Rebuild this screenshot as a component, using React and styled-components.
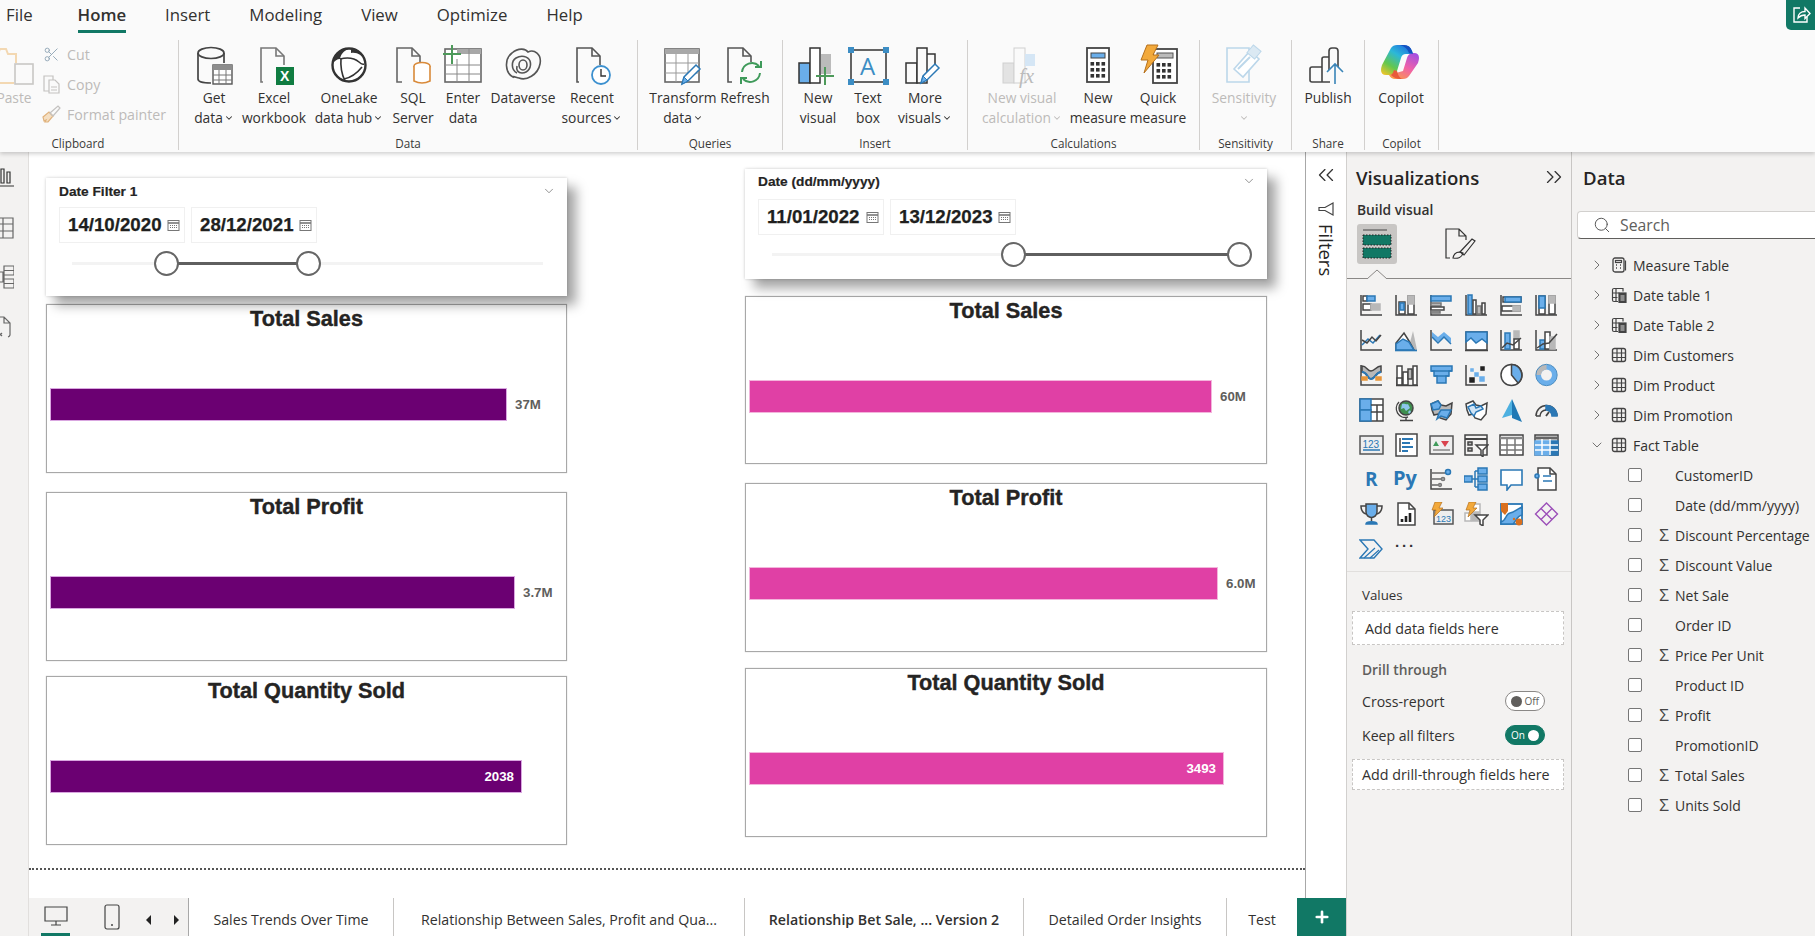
import React from "react";
import styled, { createGlobalStyle } from "styled-components";
import { ChevronDown, ChevronRight, ChevronsLeft, ChevronsRight, Search, Scissors, Plus } from "lucide-react";

const GREEN = "#117865";
const D = "#444";
const B = "#6aaeea";
const E = "#2b78b5";
const G = "#b8b8b8";
const SANS = `"Open Sans", "Noto Sans", sans-serif`;
const REPORT = `"Liberation Sans", Arial, sans-serif`;

const GlobalStyle = createGlobalStyle`
  html, body { margin: 0; padding: 0; background: #fff; overflow: hidden; }
  * { box-sizing: border-box; }
`;

const Page = styled.div`
  width: 1815px;
  height: 936px;
  display: flex;
  flex-direction: column;
  overflow: hidden;
  font-family: ${SANS};
  color: #252423;
  background: #fff;
`;

/* ---------- ribbon ---------- */
const Ribbon = styled.header`
  position: relative;
  z-index: 2;
  height: 152px;
  flex: none;
  background: #fafafa;
  box-shadow: 0 2px 4px rgba(0, 0, 0, 0.18);
  overflow: hidden;
`;
const TabBar = styled.nav`
  height: 40px;
  display: flex;
  gap: 39px;
  padding-left: 6px;
`;
const MenuTab = styled.div`
  height: 33px;
  padding-top: 3px;
  font-size: 16.8px;
  line-height: 24px;
  color: #323130;
  font-weight: ${(p) => (p.$active ? 600 : 400)};
  border-bottom: ${(p) => (p.$active ? `3px solid ${GREEN}` : "3px solid transparent")};
  margin-left: ${(p) => p.$ml || 0}px;
`;
const ShareButton = styled.div`
  position: absolute;
  top: 0;
  right: 0;
  width: 29px;
  height: 30px;
  background: ${GREEN};
  border-bottom-left-radius: 5px;
  display: flex;
  align-items: center;
  justify-content: center;
`;
const GroupRow = styled.div`
  display: flex;
  height: 110px;
`;
const Group = styled.section`
  width: ${(p) => p.$w}px;
  height: 110px;
  flex: none;
  display: flex;
  flex-direction: column;
  border-right: 1px solid #d2d0ce;
`;
const GroupBody = styled.div`
  height: 96px;
  flex: none;
  display: flex;
  padding-left: ${(p) => p.$pad || 0}px;
`;
const GroupName = styled.div`
  height: 14px;
  text-align: center;
  font-size: 11.7px;
  line-height: 14px;
  color: #3b3a39;
  padding-right: ${(p) => p.$shift || 0}px;
`;
const Tool = styled.div`
  width: ${(p) => p.$w}px;
  flex: none;
  display: flex;
  flex-direction: column;
  align-items: center;
  color: ${(p) => (p.$off ? "#bdbbb9" : "#323130")};
`;
const ToolIcon = styled.div`
  width: 40px;
  height: 40px;
  margin-top: 5px;
  margin-bottom: 3px;
  flex: none;
`;
const ToolLine = styled.div`
  height: 20px;
  font-size: 13.8px;
  line-height: 20px;
  white-space: nowrap;
  display: flex;
  align-items: center;
  gap: 1px;
`;
const SmallColumn = styled.div`
  margin-left: 13px;
  padding-top: 3px;
  display: flex;
  flex-direction: column;
  gap: 8px;
`;
const SmallTool = styled.div`
  height: 22px;
  display: flex;
  align-items: center;
  gap: 5px;
  font-size: 14.2px;
  color: #bdbbb9;
  white-space: nowrap;
`;
const SmallIcon = styled.span`
  width: 21px;
  height: 22px;
  display: flex;
  align-items: center;
  justify-content: center;
`;

/* ---------- body ---------- */
const Body = styled.main`
  flex: 1;
  display: flex;
  min-height: 0;
`;
const Rail = styled.aside`
  width: 29px;
  flex: none;
  background: #f3f2f1;
  overflow: hidden;
  display: flex;
  flex-direction: column;
  gap: 26px;
  padding-top: 13px;
  border-right: 1px solid #e1dfdd;
`;
const RailIcon = styled.svg`
  width: 24px;
  height: 24px;
  margin-left: -10px;
  fill: none;
  stroke: ${(p) => (p.$dark ? "#333" : "#666")};
  stroke-width: 1.2;
`;
const Workspace = styled.div`
  width: 1317px;
  flex: none;
  display: flex;
  flex-direction: column;
`;
const WorkRow = styled.div`
  height: 746px;
  display: flex;
`;
const Canvas = styled.div`
  width: 1277px;
  flex: none;
  border-right: 1px solid #a8a8a8;
`;
const Report = styled.div`
  height: 718px;
  display: flex;
  gap: 178px;
  padding-left: 17px;
  border-bottom: 2px dotted #555;
`;
const Column = styled.div`
  width: ${(p) => p.$w}px;
  padding-top: ${(p) => p.$top}px;
  display: flex;
  flex-direction: column;
`;

const Slicer = styled.div`
  height: ${(p) => p.$h}px;
  flex: none;
  position: relative;
  background: #fff;
  padding-left: 13px;
  box-shadow: 9px 9px 11px rgba(0, 0, 0, 0.36), 0 0 3px rgba(0, 0, 0, 0.2);
`;
const SlicerHead = styled.div`
  height: ${(p) => p.$h}px;
  padding-top: ${(p) => p.$top}px;
  display: flex;
  justify-content: space-between;
  padding-right: 11px;
  font-family: ${REPORT};
  font-weight: 700;
  font-size: 13.7px;
  line-height: 16px;
  color: #252423;
  -webkit-text-stroke: 0.2px #252423;
`;
const DateRow = styled.div`
  display: flex;
  gap: 6px;
`;
const DateBox = styled.div`
  width: 126px;
  height: 36px;
  border: 1px solid #f0f0f0;
  display: flex;
  align-items: center;
  justify-content: space-between;
  padding: 0 4px 0 8px;
  font-family: ${REPORT};
  font-weight: 700;
  font-size: 18.7px;
  color: #201f1e;
  -webkit-text-stroke: 0.25px #201f1e;
`;
const Track = styled.div`
  position: absolute;
  top: 83.5px;
  left: ${(p) => p.$left}px;
  width: ${(p) => p.$w}px;
  height: 3px;
  background: ${(p) => (p.$on ? "#5f5f5f" : "#f3f3f3")};
`;
const Knob = styled.div`
  position: absolute;
  top: 72.5px;
  left: ${(p) => p.$x - 12.5}px;
  width: 25px;
  height: 25px;
  border-radius: 50%;
  background: #fff;
  border: 2px solid #666;
`;
const Card = styled.div`
  height: ${(p) => p.$h || 169}px;
  flex: none;
  margin-top: ${(p) => p.$mt}px;
  background: #fff;
  border: 1px solid #a8a8a8;
  box-shadow: 0 0 1px #bbb;
  padding-left: 3px;
`;
const CardTitle = styled.div`
  height: 29px;
  margin-left: -3px;
  text-align: center;
  font-family: ${REPORT};
  font-weight: 700;
  font-size: 21.7px;
  line-height: 28px;
  color: #252423;
  -webkit-text-stroke: 0.4px #252423;
`;
const BarRow = styled.div`
  margin-top: 54px;
  display: flex;
  align-items: center;
  gap: 8px;
`;
const Bar = styled.div`
  width: ${(p) => p.$w}px;
  height: 33px;
  background: ${(p) => p.$color};
  border: 1px solid ${(p) => p.$edge};
  display: flex;
  align-items: center;
  justify-content: flex-end;
  padding-right: 7px;
`;
const BarValue = styled.span`
  font-family: ${REPORT};
  font-weight: 700;
  font-size: 13.3px;
  color: ${(p) => (p.$inside ? "#fff" : "#605e5c")};
`;

const FilterStrip = styled.div`
  width: 40px;
  flex: none;
  display: flex;
  flex-direction: column;
  align-items: center;
  padding-top: 10px;
`;
const FilterFunnel = styled.svg`
  margin-top: 13px;
  width: 16px;
  height: 16px;
  fill: none;
  stroke: #444;
  stroke-width: 1.2;
`;
const FilterText = styled.div`
  writing-mode: vertical-rl;
  font-size: 18.5px;
  font-weight: 500;
  line-height: 20px;
  margin-top: 7px;
  color: #252423;
`;

/* ---------- page tabs ---------- */
const PageTabs = styled.div`
  height: 38px;
  display: flex;
`;
const ViewSwitch = styled.div`
  width: 160px;
  flex: none;
  background: #f3f2f1;
  border-right: 1px solid #a8a8a8;
  display: flex;
  padding-left: 12px;
`;
const ViewButton = styled.div`
  width: ${(p) => p.$w}px;
  height: 38px;
  flex: none;
  display: flex;
  justify-content: center;
  align-items: center;
  border-bottom: ${(p) => (p.$on ? `3px solid ${GREEN}` : "none")};
  margin-right: ${(p) => p.$mr || 0}px;
`;
const Arrow = styled.span`
  width: 0;
  height: 0;
  margin-top: 17px;
  margin-right: ${(p) => p.$mr || 0}px;
  border-top: 5px solid transparent;
  border-bottom: 5px solid transparent;
  ${(p) => (p.$left ? "border-right: 5px solid #222;" : "border-left: 5px solid #222;")}
`;
const PageTab = styled.div`
  width: ${(p) => p.$w}px;
  flex: none;
  display: flex;
  align-items: center;
  justify-content: center;
  padding-top: 4px;
  font-size: 14.2px;
  font-weight: ${(p) => (p.$active ? 600 : 400)};
  color: #323130;
  white-space: nowrap;
  border-right: ${(p) => (p.$last ? "none" : "1px solid #c8c6c4")};
`;
const AddPage = styled.div`
  width: 49px;
  flex: none;
  background: ${GREEN};
  display: flex;
  align-items: center;
  justify-content: center;
`;

/* ---------- panes ---------- */
const VizPane = styled.aside`
  width: 226px;
  flex: none;
  background: #f3f2f1;
  border-left: 1px solid #d2d0ce;
  border-right: 1px solid #c8c6c4;
`;
const PaneHead = styled.div`
  height: 50px;
  display: flex;
  align-items: center;
  justify-content: space-between;
  padding: 0 4px 0 ${(p) => p.$pad}px;
  font-size: 18.6px;
  font-weight: 600;
  color: #252423;
`;
const SubHead = styled.div`
  height: 16px;
  padding-left: 10px;
  font-size: 13.8px;
  font-weight: 600;
  line-height: 16px;
  color: #323130;
`;
const BuildTabs = styled.div`
  position: relative;
  height: 55px;
  margin-top: 6px;
  padding-left: 10px;
  display: flex;
  border-bottom: 1px solid #8a8886;
`;
const BuildTab = styled.div`
  width: 40px;
  height: 40px;
  border-radius: 3px;
  background: ${(p) => (p.$on ? "#c8c6c4" : "transparent")};
  display: flex;
  align-items: center;
  justify-content: center;
  margin-right: 43px;
`;
const Notch = styled.svg`
  position: absolute;
  left: 20px;
  bottom: -1px;
  width: 20px;
  height: 10px;
`;
const VizGrid = styled.div`
  display: grid;
  grid-template-columns: repeat(6, 35px);
  grid-auto-rows: 34.8px;
  padding: 9px 0 0 7px;
  height: 293px;
  border-bottom: 1px solid #e1dfdd;
`;
const VizCell = styled.div`
  display: flex;
  align-items: center;
  justify-content: center;
`;
const VizSvg = styled.svg`
  width: 25px;
  height: 24px;
  fill: none;
  stroke: ${D};
  stroke-width: 1.5;
`;
const FieldLabel = styled.div`
  height: 20px;
  margin-top: ${(p) => p.$mt}px;
  padding-left: 15px;
  font-size: ${(p) => (p.$bold ? 13.8 : 13.3)}px;
  line-height: 20px;
  font-weight: ${(p) => (p.$bold ? 600 : 400)};
  color: ${(p) => (p.$bold ? "#605e5c" : "#323130")};
`;
const DropBox = styled.div`
  width: 212px;
  height: ${(p) => p.$h}px;
  margin: ${(p) => p.$mt}px 0 0 5px;
  padding-left: ${(p) => p.$pad}px;
  background: #fff;
  border: 1px dashed #c8c6c4;
  display: flex;
  align-items: center;
  font-size: 14.3px;
  white-space: nowrap;
  color: #323130;
`;
const ToggleRow = styled.div`
  height: 20px;
  margin-top: ${(p) => p.$mt}px;
  padding: 0 26px 0 15px;
  display: flex;
  justify-content: space-between;
  align-items: center;
  font-size: 14.1px;
  color: #323130;
`;
const Toggle = styled.div`
  width: 40px;
  height: 20px;
  border-radius: 10px;
  border: 1px solid ${(p) => (p.$on ? GREEN : "#8a8886")};
  background: ${(p) => (p.$on ? GREEN : "#fff")};
  color: ${(p) => (p.$on ? "#fff" : "#605e5c")};
  display: flex;
  flex-direction: ${(p) => (p.$on ? "row" : "row-reverse")};
  justify-content: space-between;
  align-items: center;
  padding: 0 5px;
  font-size: 10px;
`;
const ToggleDot = styled.span`
  width: 11px;
  height: 11px;
  border-radius: 50%;
  background: ${(p) => (p.$on ? "#fff" : "#605e5c")};
`;
const DataPane = styled.aside`
  flex: 1;
  background: #f3f2f1;
  overflow: hidden;
`;
const SearchBox = styled.div`
  width: 300px;
  height: 28px;
  margin: 9px 0 11px 5px;
  background: #fff;
  border: 1px solid #d2d0ce;
  border-bottom-color: #605e5c;
  border-radius: 4px;
  display: flex;
  align-items: center;
  gap: 9px;
  padding-left: 15px;
  font-size: 15.8px;
  color: #605e5c;
`;
const TreeRow = styled.div`
  height: 30px;
  display: flex;
  align-items: center;
  white-space: nowrap;
  font-size: 14px;
  color: #323130;
  padding-left: ${(p) => (p.$child ? 56 : 16)}px;
`;
const TreeChevron = styled.span`
  width: 16px;
  margin-right: 6px;
  margin-left: 1px;
  display: flex;
  justify-content: center;
  color: #444;
`;
const TreeIconSvg = styled.svg`
  width: 16px;
  height: 16px;
  margin-right: 6px;
  fill: none;
  stroke: #444;
  stroke-width: 1.2;
`;
const Check = styled.span`
  width: 14px;
  height: 14px;
  flex: none;
  border: 1px solid #777;
  border-radius: 2px;
  background: #fff;
`;
const Sigma = styled.span`
  width: 33px;
  padding-left: 13px;
  padding-right: 2px;
  flex: none;
  text-align: center;
  font-size: 17px;
  line-height: 20px;
  color: #444;
`;

/* ---------- drawing helpers ---------- */
const R = ({ a, f = "#fff", s = D, w }) => {
  const [x, y, width, height] = a.split(" ");
  return <rect x={x} y={y} width={width} height={height} fill={f} stroke={s} strokeWidth={w} />;
};
const Ax = () => <path d="M2 2v20h21" fill="none" stroke={D} strokeWidth="1.5" />;
const Pencil = ({ x = 0, y = 0 }) => (
  <g transform={`translate(${x} ${y})`}>
    <path d="M0 20l2-7L14 1l4 4L6 17z" fill="#fff" stroke={E} strokeWidth="1.5" />
    <path d="M0 20l2-7 4 4z" fill={B} stroke={E} strokeWidth="1" />
  </g>
);
const Doc = ({ s = "#555", x = 5 }) => (
  <g stroke={s} strokeWidth="1.6" fill="none">
    <path d={`M${x + 2} 37H${x}V3h15l8 8v9`} />
    <path d={`M${x + 15} 3v8h8`} />
  </g>
);
const Ico = ({ children }) => (
  <svg width="40" height="40" viewBox="0 0 40 40" fill="none" style={{ overflow: "visible" }}>
    {children}
  </svg>
);
const Text = ({ x, y, size, fill, weight, family, style, spacing, children }) => (
  <text x={x} y={y} fontSize={size} fill={fill} stroke="none" fontWeight={weight} fontFamily={family || REPORT} fontStyle={style} letterSpacing={spacing}>
    {children}
  </text>
);
const CalcBody = ({ x = 9, y = 3, w = 22, h = 34 }) => {
  const dots = [];
  for (let r = 0; r < 3; r++) for (let c = 0; c < 3; c++) dots.push(<rect key={`${r}-${c}`} x={x + 3.5 + c * 5.5} y={y + 14 + r * 6} width="3.6" height="3.6" fill="#333" />);
  return (
    <g>
      <rect x={x} y={y} width={w} height={h} fill="#fff" stroke="#444" strokeWidth="1.8" />
      {dots}
    </g>
  );
};

const Copilot = () => (
  <svg width="38" height="34" viewBox="0 0 38 34">
    <defs>
      <linearGradient id="cpA" x1="0.8" y1="0" x2="0.1" y2="1">
        <stop offset="0" stopColor="#1f6fe0" />
        <stop offset="0.35" stopColor="#2cb8d8" />
        <stop offset="0.7" stopColor="#63c74d" />
        <stop offset="1" stopColor="#f0c52a" />
      </linearGradient>
      <linearGradient id="cpB" x1="0.8" y1="0" x2="0.2" y2="1">
        <stop offset="0" stopColor="#a64fe0" />
        <stop offset="0.5" stopColor="#f061a8" />
        <stop offset="1" stopColor="#fb9a4a" />
      </linearGradient>
    </defs>
    <path d="M10 3Q12 0 16 0h7q6 0 8 6l1 3h-7q-4 0-5 4l-4 13q-1 4-6 4H5q-5 0-5-5 0-2 1-5z" fill="url(#cpA)" />
    <path d="M28 31q-2 3-6 3h-8q-4 0-6-4l14-4 4-13q1-4 5-5h2q5 0 5 5 0 2-1 5z" fill="url(#cpB)" />
    <path d="M10 30q4 4 9 4h3q-4 0-6-8l-3-1q-1 4-3 5z" fill="#e85a3a" />
    <path d="M19 0h4q6 0 8 6l1 3-4-1q-2-6-9-8z" fill="#1552c0" />
  </svg>
);

/* ---------- ribbon icons ---------- */
const I = {
  paste: (
    <Ico>
      <path d="M-8 9h12l2-5h6l2 5h8v9" stroke="#f3d8b2" strokeWidth="2" />
      <path d="M-8 38h28" stroke="#f3d8b2" strokeWidth="2" />
      <rect x="21" y="19" width="18" height="20" fill="#fafafa" stroke="#c9c7c5" strokeWidth="1.6" />
    </Ico>
  ),
  getData: (
    <Ico>
      <ellipse cx="17" cy="8" rx="13" ry="5.5" stroke="#444" strokeWidth="1.7" />
      <path d="M4 8v26q0 4 13 4M30 8v10" stroke="#444" strokeWidth="1.7" />
      <R a="19 20 19 19" s="#555" w="1.4" />
      <rect x="19" y="20" width="19" height="5" fill="#8d8d8d" />
      <path d="M25 25v14M32 25v14M19 30h19M19 35h19" stroke="#777" />
    </Ico>
  ),
  excel: (
    <Ico>
      <Doc s="#777" x={7} />
      <rect x="22" y="22" width="18" height="18" fill="#107c41" />
      <Text x="26" y="36" size="14" fill="#fff" weight="700">X</Text>
    </Ico>
  ),
  onelake: (
    <Ico>
      <circle cx="20" cy="20" r="16.5" fill="#fff" stroke="#333" strokeWidth="2.4" />
      <path d="M4 18C5 8 13 2 22 3c-6 2-10 5-11 11-3 0-5 2-7 4z" fill="#333" />
      <path d="M22 3c7 1 12 5 14 12-3-5-8-8-14-7z" fill="#333" />
      <path d="M12 13q-1 13 4 23M11 14q12-3 19 3 3 3 5 2M15 34q10-2 18-12" stroke="#333" strokeWidth="1.6" />
    </Ico>
  ),
  sql: (
    <Ico>
      <path d="M9 37H4V3h15l8 8v6" stroke="#666" strokeWidth="1.6" />
      <path d="M19 3v8h8" stroke="#666" strokeWidth="1.6" />
      <ellipse cx="29" cy="21" rx="8" ry="3.5" fill="#fff" stroke="#d98a3a" strokeWidth="1.6" />
      <path d="M21 21v15q8 4 16 0V21" fill="#fff" stroke="#d98a3a" strokeWidth="1.6" />
    </Ico>
  ),
  enter: (
    <Ico>
      <rect x="2" y="4" width="36" height="33" fill="#fff" stroke="#666" strokeWidth="1.6" />
      <rect x="14" y="4" width="24" height="5" fill="#a8a8a8" />
      <path d="M14 14v23M26 4v33M2 20h36M2 29h36" stroke="#888" />
      <path d="M9 0v19M0 9h18" stroke="#4d9a5a" strokeWidth="2" />
    </Ico>
  ),
  dataverse: (
    <Ico>
      <path d="M10 32C2 28 1 14 9 8c7-6 14-4 16-1 6-3 14 2 12 12-2 11-14 17-21 14-4-1-6-2-6-1z" stroke="#555" strokeWidth="1.6" />
      <path d="M14 28c-6-3-6-12-1-15 5-3 12-2 14 3 2 6-2 12-8 12-4 0-6-3-5-7" stroke="#555" strokeWidth="1.6" />
      <ellipse cx="20" cy="20" rx="4" ry="5" stroke="#555" strokeWidth="1.6" />
    </Ico>
  ),
  recent: (
    <Ico>
      <Doc s="#555" />
      <circle cx="29" cy="30" r="9" fill="#fff" stroke="#3c90cf" strokeWidth="1.8" />
      <path d="M29 24v7h5" stroke="#333" strokeWidth="1.4" />
    </Ico>
  ),
  transform: (
    <Ico>
      <rect x="2" y="4" width="34" height="33" fill="#fff" stroke="#666" strokeWidth="1.6" />
      <rect x="2" y="4" width="34" height="5" fill="#a8a8a8" />
      <path d="M13 9v28M25 9v28M2 18h34M2 28h34" stroke="#999" />
      <Pencil x="19" y="19" />
    </Ico>
  ),
  refresh: (
    <Ico>
      <path d="M7 37H3V3h15l8 8v6" stroke="#555" strokeWidth="1.6" />
      <path d="M18 3v8h8" stroke="#555" strokeWidth="1.6" />
      <path d="M17 27a10 10 0 0 1 17-6M35 28a10 10 0 0 1-17 6" stroke="#3f9a5a" strokeWidth="2" />
      <path d="M36 16v6h-6M16 39v-6h6" stroke="#3f9a5a" strokeWidth="2" />
    </Ico>
  ),
  newVisual: (
    <Ico>
      <rect x="1" y="18" width="11" height="20" fill={B} stroke="#333" strokeWidth="1.5" />
      <rect x="12" y="3" width="10" height="35" fill="#fff" stroke="#333" strokeWidth="1.5" />
      <rect x="23" y="9" width="10" height="20" fill="#bbb" />
      <path d="M27 22v18M18 31h18" stroke="#4d9a5a" strokeWidth="2" />
    </Ico>
  ),
  textBox: (
    <Ico>
      <rect x="3" y="5" width="35" height="32" stroke="#333" strokeWidth="1.5" />
      <path d="M0 2h6v6H0zM35 2h6v6h-6zM0 34h6v6H0zM35 34h6v6h-6z" fill="#3c8dc4" />
      <Text x="12" y="30" size="24" fill="#3c8dc4" family={SANS}>A</Text>
    </Ico>
  ),
  moreVisuals: (
    <Ico>
      <rect x="1" y="18" width="11" height="20" stroke="#333" strokeWidth="1.5" />
      <rect x="12" y="3" width="10" height="35" fill="#fafafa" stroke="#333" strokeWidth="1.5" />
      <path d="M22 9h8v11" stroke="#333" strokeWidth="1.5" />
      <Pencil x="16" y="18" />
    </Ico>
  ),
  visualCalc: (
    <Ico>
      <rect x="1" y="18" width="11" height="20" fill="#e3e3e3" stroke="#d0d0d0" />
      <rect x="12" y="3" width="11" height="35" fill="#fafafa" stroke="#d0d0d0" />
      <rect x="23" y="9" width="10" height="12" fill="#d5e6f5" />
      <Text x="17" y="38" size="21" fill="#bbb" family={`"Liberation Serif", serif`} style="italic">fx</Text>
    </Ico>
  ),
  measure: (
    <Ico>
      <CalcBody />
      <rect x="13" y="8" width="14" height="5" fill={B} stroke="#444" />
    </Ico>
  ),
  quick: (
    <Ico>
      <CalcBody x={15} y={4} w={24} h={34} />
      <rect x="19" y="8" width="16" height="5" fill="#bbb" stroke="#555" />
      <path d="M9 0h11l-5 10h6L6 28l4-13H3z" fill="#f2a93b" stroke="#b5701d" />
    </Ico>
  ),
  sensitivity: (
    <Ico>
      <path d="M3 3h22v34H3z" stroke="#bcd7ea" strokeWidth="1.6" />
      <path d="M10 24L26 6l9 8-16 18z" fill="#fff" stroke="#bcd7ea" strokeWidth="1.6" />
      <path d="M14 24L26 12" stroke="#bcd7ea" strokeWidth="2" />
      <rect x="25" y="2" width="10" height="10" fill="#dbe9f3" stroke="#bcd7ea" transform="rotate(40 30 7)" />
    </Ico>
  ),
  publish: (
    <Ico>
      <path d="M4 37a2 2 0 0 1-2-2V24a2 2 0 0 1 2-2h10v15zM14 22v-8a2 2 0 0 1 2-2h5v13M21 12V6a3 3 0 0 1 3-3h3a3 3 0 0 1 3 3v16M14 37h8" stroke="#444" strokeWidth="1.6" />
      <path d="M27 39V19M19 27l8-8 8 8" stroke="#3a85b8" strokeWidth="1.6" />
    </Ico>
  ),
};

/* ---------- visual gallery ---------- */
const Gallery = [
  <><Ax /><R a="4 3 4 5" /><R a="8 3 8 5" f={B} s={E} /><R a="4 11 8 6" /><R a="12 11 9 6" f={G} s={G} /></>,
  <><Ax /><R a="5 9 6 12" /><R a="6 10 4 7" f={B} s={E} /><R a="14 3 6 18" /><R a="14 3 6 8" f={G} s={G} /></>,
  <><Ax /><R a="2 3 20 5" f={B} s={E} /><R a="2 10 10 3" f={G} s="#777" /><R a="2 14 13 3" /><R a="2 18 9 2" f={G} s="#777" /></>,
  <><Ax /><R a="4 2 4 19" f={B} s={E} /><R a="9 7 3 14" /><R a="13 13 4 8" f={G} s="#777" /><R a="18 10 3 11" /></>,
  <><Ax /><R a="4 4 18 5" /><R a="6 4 16 5" f={B} s={E} /><R a="3 13 18 5" /><R a="14 13 7 5" f={G} s={G} /></>,
  <><Ax /><R a="5 3 6 18" /><R a="5 3 6 12" f={B} s={E} /><R a="15 3 6 18" /><R a="15 3 6 7" f={G} s={G} /></>,
  <><Ax /><path d="M3 17l6-6 5 4 7-8" stroke={E} /><path d="M3 12l5 3 5-6 4 4 5-6" stroke={D} /></>,
  <><path d="M14 22L19 3l4 19z" fill={G} stroke="none" /><path d="M2 22V15L10 5l5 8 5 9z" fill="#fff" stroke={D} /><path d="M2 22v-6l7-5 6 3 5 8z" fill={B} stroke={E} /><path d="M1 22.5h22" stroke={E} strokeWidth="1.6" /></>,
  <><Ax /><path d="M3 4l6 5 6-5 7 6v5l-7-6-6 5-6-5z" fill={B} stroke="none" /><path d="M3 9l6 6 6-6 7 7" stroke={E} /></>,
  <><path d="M2 4h21v18H2z" fill="#fff" stroke={D} /><path d="M2 4h21v11l-5-4-6 4-5-5-5 4z" fill={B} stroke={E} /><path d="M1 22.5h23" strokeWidth="1.5" /></>,
  <><Ax /><R a="6 5 5 16" f={B} s={E} /><R a="15 3 5 8" f={G} s={G} /><R a="15 11 5 10" /><path d="M3 20l5-5 6 2 8-7" /></>,
  <><Ax /><R a="6 12 5 9" f={B} s={E} /><R a="11 4 5 17" /><R a="16 9 5 12" f={G} s={G} /><path d="M3 20l6-4 6-1 8-9" /></>,
  <><Ax /><path d="M3 3c5 0 5 5 9 5s5-5 10-5v6c-5 0-6 7-10 7S8 9 3 9z" fill={G} stroke={D} /><path d="M3 9c6 0 5 7 9 7s5-7 10-7" stroke={E} strokeWidth="2" /><R a="3 14 5 3" f="#e8963a" s="#e8963a" /><R a="17 14 5 3" f="#e8963a" s="#e8963a" /></>,
  <><R a="3 3 5 19" /><R a="3 15 5 7" /><R a="9 9 5 13" /><R a="14 6 4 10" f={G} s={D} /><R a="19 3 4 19" /><path d="M2 22.5h22" strokeWidth="1.5" /></>,
  <><path d="M2 3h21v5h-3v5h-3v7H8v-7H5V8H2z" fill={B} stroke={E} /><path d="M2 8h21M5 13h15" stroke={E} /></>,
  <><Ax /><R a="7 6 2 2" f="#cde" s={B} /><R a="11 10 3 3" f={B} s={B} /><R a="6 15 4 4" f="#222" s="#222" /><R a="17 4 3 3" f="#222" s="#222" /><R a="16 14 4 4" f={B} s={B} /></>,
  <><circle cx="12.5" cy="12" r="10.5" fill="#fff" strokeWidth="1.5" /><path d="M12.5 1.500A10.500 10.500 0 0 1 19 20l-6.500-8z" fill={B} stroke={D} /></>,
  <><circle cx="12.5" cy="12" r="8" stroke={B} strokeWidth="5" /><path d="M4.500 12a8 8 0 0 1 8-8" stroke={G} strokeWidth="5" /><circle cx="12.5" cy="12" r="10.7" stroke={E} strokeWidth=".8" /></>,
  <><R a="1 1 23 22" /><R a="1 1 11 11" f={B} s={E} /><R a="1 12 11 11" f={B} s={E} /><path d="M12 7h12M18 7v16M12 14h12" /></>,
  <><circle cx="12" cy="10" r="7" fill="#3f8f4f" stroke={D} /><path d="M8 6c3-1 4 1 6 0l2 4-4 3-2-3-3 1zM14 14l2-2 1 2-2 2z" fill="#8cc6ea" stroke="none" /><path d="M5 4a9 9 0 0 0 9 15M12 19v3M6 22.500h13" strokeWidth="1.4" /></>,
  <><path d="M2 6l7-3 3 4 5 1 6-3-1 11-5 6-6-2-2-4-4 1-2-5z" fill={G} stroke={D} /><path d="M12 12l10 0-4 8-6-2-4 3 2-6z" fill={B} stroke={E} /><path d="M2 6l7-3 3 4-2 4-6 1z" fill={B} stroke={E} /></>,
  <><path d="M2 6l7-3 3 4 5 1 6-3-1 11-5 6-6-2-2-4-4 1-2-5z" fill="#fff" stroke={D} /><path d="M4 9l6-3 2 4 5-2 2 3-7 3-2 4-3-3z" fill="#cfe4f6" stroke={E} /></>,
  <><path d="M13 1L23 24l-10-4z" fill="#1f78b4" stroke="none" /><path d="M13 1L3 20l10-3z" fill="#4db0e0" stroke="none" /></>,
  <><path d="M2 18a10.500 10.500 0 0 1 21 0" strokeWidth="1.5" /><path d="M12 7.500a10.500 10.500 0 0 1 11 10.500h-5a6 6 0 0 0-6-6z" fill={E} stroke={E} /><path d="M12 18l3-4" strokeWidth="1.8" /><path d="M2 18h4a6 6 0 0 1 6-6" /></>,
  <><R a="1 3 23 18" f="#eee" s="#555" /><Text x="3.5" y="15" size="10" fill={E}>123</Text><path d="M4 17h17" stroke={E} /></>,
  <><R a="2 1 21 22" /><path d="M6 5v14" /><path d="M8 6h11M8 10h8M8 14h11M8 18h6" stroke={E} strokeWidth="1.8" /></>,
  <><R a="1 3 23 18" f="#eee" s="#555" /><path d="M4 13l3-5 3 5z" fill="#3f9a5a" stroke="none" /><path d="M12 8h8l-4 6z" fill="#d9434e" stroke="none" /><path d="M4 17h17" strokeWidth=".9" /></>,
  <><R a="1 2 22 20" f="#f3f2f1" /><path d="M1 6h22" strokeWidth="2" /><R a="4 9 4 3" f={G} /><R a="4 15 4 3" f={G} /><path d="M12 12h12l-5 5v7l-2-2v-5z" fill="#fff" /></>,
  <><R a="1 2 23 20" /><path d="M1 5h23" strokeWidth="2.5" stroke="#888" /><path d="M8 6v16M16 6v16M1 12h23M1 17h23" stroke="#777" /></>,
  <><R a="1 2 23 20" /><path d="M1 5h23" strokeWidth="3" stroke="#666" /><R a="1 8 15 14" f={B} s={B} /><R a="16 8 8 14" f={E} s={E} /><path d="M8 6v16M16 6v16M1 12h23M1 17h23" stroke="#fff" /></>,
  <Text x="6" y="19" size="19" fill={E} weight="700" family={SANS}>R</Text>,
  <Text x="-1" y="18" size="20" fill={E} weight="700" family={SANS}>Py</Text>,
  <><Ax /><path d="M3 6h13M3 12h9M3 18h6" stroke="#666" /><circle cx="19" cy="5" r="2.5" stroke={E} fill={B} /><circle cx="14" cy="12" r="1.6" fill={G} stroke="#777" /><circle cx="11" cy="18" r="1.4" fill={G} stroke="#777" /></>,
  <><R a="0 9 8 6" f={B} s={E} /><R a="14 1 9 6" f={B} s={E} /><R a="14 9 9 6" f={B} s={E} /><R a="14 17 9 6" f={B} s={E} /><path d="M8 12h6M11 4v16M11 4h3M11 20h3" stroke={E} /></>,
  <path d="M2 3h21v15H12l-4 5v-5H2z" fill="#fff" stroke={E} strokeWidth="1.6" />,
  <><path d="M4 1h12l6 6v16H4z" fill="#fff" /><path d="M16 1v6h6" /><circle cx="3" cy="9" r="2" fill={B} stroke={E} /><path d="M9 9h8M9 14h9" stroke={E} /></>,
  <><path d="M7 2h11v8a5.500 5.500 0 0 1-11 0z" fill={B} stroke={D} /><path d="M7 4H2c0 5 2 7 5 8M18 4h5c0 5-2 7-5 8M12.500 15v4" stroke={D} /><path d="M7 22c0-3 11-3 11 0z" fill={E} stroke={E} /></>,
  <><path d="M4 1h11l6 6v16H4z" fill="#fff" /><path d="M15 1v6h6" /><path d="M8 20v-3M12 20v-6M16 20v-9" strokeWidth="2.6" stroke="#222" /></>,
  <><R a="5 8 19 14" f="#eee" s="#555" /><Text x="7" y="20" size="9" fill={E}>123</Text><path d="M6 0h7l-3 6h4L5 15l2-7H3z" fill="#f2a93b" stroke="#b5701d" strokeWidth=".7" /></>,
  <><R a="8 2 8 8" f="#fff" s={G} /><R a="8 11 8 8" f={G} s={G} /><R a="1 11 6 8" f="#fff" s={G} /><path d="M11 13h13l-5 5v6l-3-2v-4z" fill="#fff" /><path d="M5 0h7l-3 6h4L4 15l2-7H2z" fill="#f2a93b" stroke="#b5701d" strokeWidth=".7" /></>,
  <><R a="2 2 21 20" f="#fff" s={E} w="1.8" /><path d="M2 20c6-2 4-8 9-9s7-4 12-6v8c-5 1-6 6-9 9H2z" fill={B} stroke={E} /><path d="M2 1h7v8l-3 4-4-4z" fill="#d9701f" stroke="none" /><circle cx="20" cy="20" r="3.4" fill="#d9701f" stroke="none" /><circle cx="15" cy="17" r="1.2" fill="#d9701f" stroke="none" /></>,
  <><path d="M12.500 1l11 11-11 11L1.500 12z" stroke="#9b4fb8" strokeWidth="1.4" /><path d="M7 6.500l11 11M18 6.500l-11 11" stroke="#9b4fb8" strokeWidth="1.4" /></>,
  <><path d="M1 3h14l8 9-8 9H1l8-9z" stroke={E} strokeWidth="1.4" /><path d="M5 21l11-10M11 21l9-8" stroke={E} strokeWidth="1.2" /></>,
  <Text x="1" y="14" size="15" fill="#333" weight="700" spacing="2">···</Text>,
];

const CalendarIcon = () => (
  <svg width="13" height="13" viewBox="0 0 13 13" fill="none" stroke="#777">
    <rect x="1" y="1.5" width="11" height="10" />
    <path d="M1 4h11" strokeWidth="1.6" />
    <path d="M3 6.5h7M3 8.5h7" strokeDasharray="1 1" />
  </svg>
);

const Range = ({ title, from, to, head, top, height, track, knobs }) => (
  <Slicer $h={height}>
    <SlicerHead $h={head} $top={top}>
      {title}
      <ChevronDown size={14} strokeWidth={1.2} color="#666" />
    </SlicerHead>
    <DateRow>
      <DateBox>{from}<CalendarIcon /></DateBox>
      <DateBox>{to}<CalendarIcon /></DateBox>
    </DateRow>
    <Track $left={track[0]} $w={track[1]} />
    <Track $on $left={knobs[0]} $w={knobs[1] - knobs[0]} />
    <Knob $x={knobs[0]} />
    <Knob $x={knobs[1]} />
  </Slicer>
);

const Metric = ({ title, value, width, mt, h, color, edge, inside }) => (
  <Card $mt={mt} $h={h}>
    <CardTitle>{title}</CardTitle>
    <BarRow>
      <Bar $w={width} $color={color} $edge={edge}>
        {inside && <BarValue $inside>{value}</BarValue>}
      </Bar>
      {!inside && <BarValue>{value}</BarValue>}
    </BarRow>
  </Card>
);

const Caret = () => <ChevronDown size={10} strokeWidth={2.5} />;

const RibbonTool = ({ w, icon, lines, caret, off }) => (
  <Tool $w={w} $off={off}>
    <ToolIcon>{icon}</ToolIcon>
    {lines.map((l, i) => (
      <ToolLine key={l}>
        {l}
        {caret && i === lines.length - 1 && <Caret />}
      </ToolLine>
    ))}
  </Tool>
);

const TableIcon = () => (
  <TreeIconSvg viewBox="0 0 16 16">
    <rect x="1.5" y="1.5" width="13" height="13" rx="2" strokeWidth="1.4" />
    <path d="M6 1.5v13M10.5 1.5v13M1.5 6h13M1.5 10.5h13" />
  </TreeIconSvg>
);
const CalcTableIcon = () => (
  <TreeIconSvg viewBox="0 0 16 16">
    <path d="M9 1.5H3A1.5 1.5 0 0 0 1.5 3v10A1.5 1.5 0 0 0 3 14.5h4M5 1.5v13M1.5 6h7M1.5 10.5h5" />
    <rect x="8" y="6" width="7" height="9.5" fill="#444" />
    <path d="M9.5 9h4M9.5 11h4M9.5 13h4" stroke="#fff" strokeWidth=".8" />
    <path d="M9 1.5h3v3" />
  </TreeIconSvg>
);
const MeasureIcon = () => (
  <TreeIconSvg viewBox="0 0 16 16">
    <rect x="2" y="1" width="11" height="14" rx="2" strokeWidth="1.3" />
    <rect x="4.5" y="3.5" width="6" height="2" />
    <path d="M5 8h1M9 8h1M5 11h1M9 11h1" strokeWidth="1.5" />
    <path d="M14.5 3.5v10" />
  </TreeIconSvg>
);

const Tables = [
  ["Measure Table", <MeasureIcon />],
  ["Date table 1", <CalcTableIcon />],
  ["Date Table 2", <CalcTableIcon />],
  ["Dim Customers", <TableIcon />],
  ["Dim Product", <TableIcon />],
  ["Dim Promotion", <TableIcon />],
];
const Fields = [
  ["CustomerID"],
  ["Date (dd/mm/yyyy)"],
  ["Discount Percentage", true],
  ["Discount Value", true],
  ["Net Sale", true],
  ["Order ID"],
  ["Price Per Unit", true],
  ["Product ID"],
  ["Profit", true],
  ["PromotionID"],
  ["Total Sales", true],
  ["Units Sold", true],
];

const PURPLE = { color: "#6b0072", edge: "#d9a6e0" };
const PINK = { color: "#e040a5", edge: "#f3b5dc" };

export default function App() {
  return (
    <Page>
      <GlobalStyle />
      <Ribbon>
        <TabBar>
          {["File", "Home", "Insert", "Modeling", "View", "Optimize", "Help"].map((t) => (
            <MenuTab key={t} $active={t === "Home"} $ml={t === "Home" ? 6 : 0}>
              {t}
            </MenuTab>
          ))}
        </TabBar>
        <ShareButton>
          <svg width="20" height="20" viewBox="0 0 20 20" fill="none" stroke="#fff" strokeWidth="1.4">
            <path d="M9 3H3v14h13v-5" />
            <path d="M7 13c0-4 3-6.5 7-6.5V3l5 5.5-5 5V10c-3 0-5 1-7 3z" />
          </svg>
        </ShareButton>
        <GroupRow>
          <Group $w={179}>
            <GroupBody>
              <RibbonTool w={28} icon={I.paste} lines={["Paste"]} off />
              <SmallColumn>
                <SmallTool><SmallIcon><Scissors size={17} strokeWidth={1.3} color="#8fa5b5" /></SmallIcon>Cut</SmallTool>
                <SmallTool>
                  <SmallIcon>
                    <svg width="20" height="20" viewBox="0 0 20 20" fill="#fafafa" stroke="#c4c2c0" strokeWidth="1.2">
                      <path d="M2 2h9v15H2z" />
                      <path d="M7 6h6l4 4v9H7z" />
                      <path d="M9 13h6M9 16h6" />
                    </svg>
                  </SmallIcon>
                  Copy
                </SmallTool>
                <SmallTool>
                  <SmallIcon>
                    <svg width="21" height="20" viewBox="0 0 21 20" fill="none" strokeWidth="1.2">
                      <path d="M2 13l6-5 4 4-5 6H4l1-2-2 1z" fill="#f5dfc2" stroke="#e0b27c" />
                      <path d="M9 9l8-7 2 2-7 8z" stroke="#c4c2c0" />
                    </svg>
                  </SmallIcon>
                  Format painter
                </SmallTool>
              </SmallColumn>
            </GroupBody>
            <GroupName $shift={22}>Clipboard</GroupName>
          </Group>
          <Group $w={459}>
            <GroupBody $pad={7}>
              <RibbonTool w={56} icon={I.getData} lines={["Get", "data"]} caret />
              <RibbonTool w={64} icon={I.excel} lines={["Excel", "workbook"]} />
              <RibbonTool w={86} icon={I.onelake} lines={["OneLake", "data hub"]} caret />
              <RibbonTool w={42} icon={I.sql} lines={["SQL", "Server"]} />
              <RibbonTool w={58} icon={I.enter} lines={["Enter", "data"]} />
              <RibbonTool w={62} icon={I.dataverse} lines={["Dataverse"]} />
              <RibbonTool w={76} icon={I.recent} lines={["Recent", "sources"]} caret />
            </GroupBody>
            <GroupName>Data</GroupName>
          </Group>
          <Group $w={145}>
            <GroupBody $pad={11}>
              <RibbonTool w={68} icon={I.transform} lines={["Transform", "data"]} caret />
              <RibbonTool w={56} icon={I.refresh} lines={["Refresh"]} />
            </GroupBody>
            <GroupName>Queries</GroupName>
          </Group>
          <Group $w={185}>
            <GroupBody $pad={10}>
              <RibbonTool w={50} icon={I.newVisual} lines={["New", "visual"]} />
              <RibbonTool w={50} icon={I.textBox} lines={["Text", "box"]} />
              <RibbonTool w={64} icon={I.moreVisuals} lines={["More", "visuals"]} caret />
            </GroupBody>
            <GroupName>Insert</GroupName>
          </Group>
          <Group $w={232}>
            <GroupBody $pad={12}>
              <RibbonTool w={84} icon={I.visualCalc} lines={["New visual", "calculation"]} caret off />
              <RibbonTool w={68} icon={I.measure} lines={["New", "measure"]} />
              <RibbonTool w={52} icon={I.quick} lines={["Quick", "measure"]} />
            </GroupBody>
            <GroupName>Calculations</GroupName>
          </Group>
          <Group $w={92}>
            <GroupBody $pad={4}>
              <Tool $w={80} $off>
                <ToolIcon>{I.sensitivity}</ToolIcon>
                <ToolLine>Sensitivity</ToolLine>
                <ToolLine><Caret /></ToolLine>
              </Tool>
            </GroupBody>
            <GroupName>Sensitivity</GroupName>
          </Group>
          <Group $w={73}>
            <GroupBody $pad={6}>
              <RibbonTool w={60} icon={I.publish} lines={["Publish"]} />
            </GroupBody>
            <GroupName>Share</GroupName>
          </Group>
          <Group $w={74}>
            <GroupBody $pad={6}>
              <RibbonTool w={60} icon={<Copilot />} lines={["Copilot"]} />
            </GroupBody>
            <GroupName>Copilot</GroupName>
          </Group>
        </GroupRow>
      </Ribbon>

      <Body>
        <Rail>
          <RailIcon viewBox="0 0 24 24" $dark>
            <path d="M11 4h3v14h-3zM17 7h3v11h-3zM5 10h3v8H5zM2 21h22" />
          </RailIcon>
          <RailIcon viewBox="0 0 24 24">
            <path d="M3 3h20v20H3zM3 9h20M3 16h20M13 3v20" />
          </RailIcon>
          <RailIcon viewBox="0 0 24 24">
            <path d="M14 1h10v9H14zM14 14h10v9H14zM14 5.5h10M14 18.5h10M4 7h9v10H4zM14 8v8" />
          </RailIcon>
          <RailIcon viewBox="0 0 24 24">
            <path d="M4 2h10l6 6v12a3 3 0 0 1-2 2M14 2v6h6M3 18l3 3M6 18l-3 3M9 18l3 3M12 18l-3 3" />
          </RailIcon>
        </Rail>
        <Workspace>
          <WorkRow>
            <Canvas>
              <Report>
                <Column $w={521} $top={26}>
                  <Range title="Date Filter 1" from="14/10/2020" to="28/12/2021" height={118} head={29} top={6} track={[26, 471]} knobs={[120, 262]} />
                  <Metric title="Total Sales" value="37M" width={457} mt={8} {...PURPLE} />
                  <Metric title="Total Profit" value="3.7M" width={465} mt={19} {...PURPLE} />
                  <Metric title="Total Quantity Sold" value="2038" width={472} mt={15} inside {...PURPLE} />
                </Column>
                <Column $w={522} $top={17}>
                  <Range title="Date (dd/mm/yyyy)" from="11/01/2022" to="13/12/2023" height={110} head={30} top={5} track={[27, 467]} knobs={[268, 494]} />
                  <Metric title="Total Sales" value="60M" width={463} mt={17} h={168} {...PINK} />
                  <Metric title="Total Profit" value="6.0M" width={469} mt={19} {...PINK} />
                  <Metric title="Total Quantity Sold" value="3493" width={475} mt={16} inside {...PINK} />
                </Column>
              </Report>
            </Canvas>
            <FilterStrip>
              <ChevronsLeft size={26} strokeWidth={1.2} color="#333" />
              <FilterFunnel viewBox="0 0 16 16">
                <path d="M15 2v12L7 9.5H1v-3h6z" />
              </FilterFunnel>
              <FilterText>Filters</FilterText>
            </FilterStrip>
          </WorkRow>
          <PageTabs>
            <ViewSwitch>
              <ViewButton $w={29} $on $mr={34}>
                <svg width="24" height="20" viewBox="0 0 24 20" fill="none" stroke="#444" strokeWidth="1.2">
                  <path d="M1 1h22v14H1zM12 15v4M7 19h10" />
                </svg>
              </ViewButton>
              <ViewButton $w={16} $mr={26}>
                <svg width="16" height="26" viewBox="0 0 16 26" fill="none" stroke="#444" strokeWidth="1.2">
                  <rect x="1" y="1" width="14" height="24" rx="2" />
                  <path d="M7 21h2" strokeWidth="1.5" />
                </svg>
              </ViewButton>
              <Arrow $left $mr={23} />
              <Arrow />
            </ViewSwitch>
            <PageTab $w={205}>Sales Trends Over Time</PageTab>
            <PageTab $w={351}>Relationship Between Sales, Profit and Qua...</PageTab>
            <PageTab $w={279} $active>Relationship Bet Sale, ... Version 2</PageTab>
            <PageTab $w={203}>Detailed Order Insights</PageTab>
            <PageTab $w={70} $last>Test</PageTab>
            <AddPage><Plus size={18} strokeWidth={3.5} color="#fff" /></AddPage>
          </PageTabs>
        </Workspace>

        <VizPane>
          <PaneHead $pad={9}>
            Visualizations
            <ChevronsRight size={26} strokeWidth={1.2} color="#333" />
          </PaneHead>
          <SubHead>Build visual</SubHead>
          <BuildTabs>
            <BuildTab $on>
              <svg width="32" height="32" viewBox="0 0 32 32" fill="none">
                <path d="M2 2h24" stroke="#444" />
                <rect x="2" y="7" width="28" height="10" fill={GREEN} stroke="#222" strokeDasharray="1.5 1.5" />
                <rect x="2" y="20" width="28" height="10" fill={GREEN} stroke="#222" strokeDasharray="1.5 1.5" />
              </svg>
            </BuildTab>
            <BuildTab>
              <svg width="32" height="32" viewBox="0 0 32 32" fill="none" stroke="#333" strokeWidth="1.2">
                <path d="M6 30H2V1h13l7 7v4M15 1v7h7" />
                <path d="M16 24L28 11l3 2-11 14z" />
                <path d="M9 30c1-6 6-7 10-5-1 4-5 6-10 5z" />
              </svg>
            </BuildTab>
            <Notch viewBox="0 0 20 10">
              <path d="M0 10L10 1l10 9" fill="#f3f2f1" stroke="#8a8886" />
            </Notch>
          </BuildTabs>
          <VizGrid>
            {Gallery.map((icon, i) => (
              <VizCell key={i}>
                <VizSvg viewBox="0 0 25 24">{icon}</VizSvg>
              </VizCell>
            ))}
          </VizGrid>
          <FieldLabel $mt={13}>Values</FieldLabel>
          <DropBox $mt={6} $h={34} $pad={12}>Add data fields here</DropBox>
          <FieldLabel $mt={15} $bold>Drill through</FieldLabel>
          <ToggleRow $mt={11}>
            Cross-report
            <Toggle><span>Off</span><ToggleDot /></Toggle>
          </ToggleRow>
          <ToggleRow $mt={14}>
            Keep all filters
            <Toggle $on><span>On</span><ToggleDot $on /></Toggle>
          </ToggleRow>
          <DropBox $mt={14} $h={31} $pad={9}>Add drill-through fields here</DropBox>
        </VizPane>

        <DataPane>
          <PaneHead $pad={11}>Data</PaneHead>
          <SearchBox>
            <Search size={18} strokeWidth={1.3} color="#555" />
            Search
          </SearchBox>
          {Tables.map(([name, icon]) => (
            <TreeRow key={name}>
              <TreeChevron><ChevronRight size={20} strokeWidth={1.1} /></TreeChevron>
              {icon}
              {name}
            </TreeRow>
          ))}
          <TreeRow>
            <TreeChevron><ChevronDown size={20} strokeWidth={1.1} /></TreeChevron>
            <TableIcon />
            Fact Table
          </TreeRow>
          {Fields.map(([name, sum]) => (
            <TreeRow key={name} $child>
              <Check />
              <Sigma>{sum ? "Σ" : ""}</Sigma>
              {name}
            </TreeRow>
          ))}
        </DataPane>
      </Body>
    </Page>
  );
}
